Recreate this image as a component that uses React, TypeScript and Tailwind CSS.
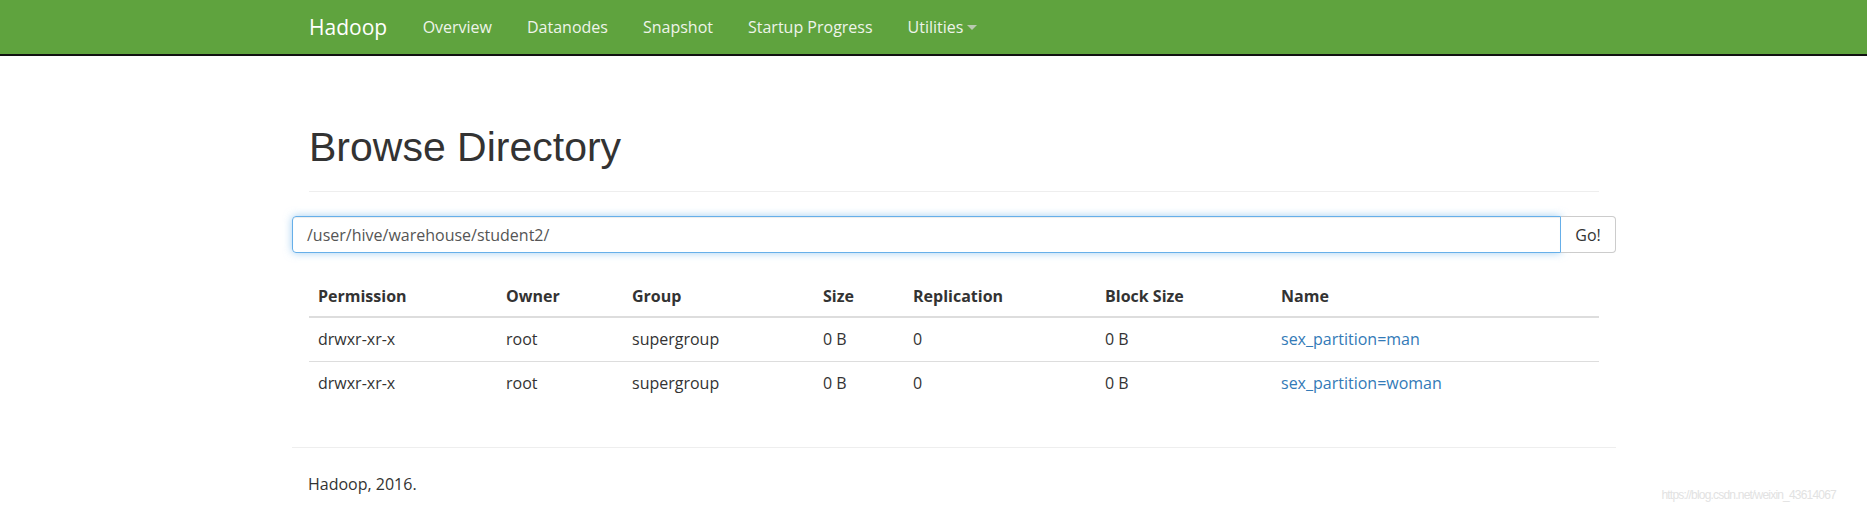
import React from "react";

const rows = [
  { perm: "drwxr-xr-x", owner: "root", group: "supergroup", size: "0 B", rep: "0", block: "0 B", name: "sex_partition=man" },
  { perm: "drwxr-xr-x", owner: "root", group: "supergroup", size: "0 B", rep: "0", block: "0 B", name: "sex_partition=woman" },
];

const body = { fontFamily: '"Open Sans", "Noto Sans", sans-serif' };

export default function App() {
  return (
    <div className="relative min-h-[515px] bg-white text-[#333]" style={body}>
      <nav className="h-[56px] bg-[#5fa33e] border-b-2 border-[#111]">
        <div className="ml-[309px] flex h-full items-center">
          <span className="text-[21px] leading-[23px] text-white mr-[18px]">Hadoop</span>
          <ul className="flex items-center text-[16px] leading-[23px] text-[#eef4ea]">
            <li className="px-[17.5px]">Overview</li>
            <li className="px-[17.5px]">Datanodes</li>
            <li className="px-[17.5px]">Snapshot</li>
            <li className="px-[17.5px]">Startup Progress</li>
            <li className="px-[17.5px] flex items-center">
              Utilities
              <svg width="10" height="6" viewBox="0 0 10 6" className="ml-[4px] mt-[2px]">
                <path d="M0 0 L10 0 L5 5 Z" fill="#b9c9b1" />
              </svg>
            </li>
          </ul>
        </div>
      </nav>

      <main className="ml-[292px] w-[1324px]">
        <div className="mx-[17px] mt-[69px] pb-[10px] border-b border-[#eee]">
          <h1
            className="text-[41px] leading-[45px] mb-[11px] text-[#333]"
            style={{ fontFamily: '"Liberation Sans", Arial, sans-serif' }}
          >
            Browse Directory
          </h1>
        </div>

        <div className="mt-[24px] flex h-[37px]">
          <div className="flex-1 flex items-center rounded-l-[4px] border border-[#66afe9] pl-[14px] text-[16px] text-[#555] shadow-[inset_0_1px_1px_rgba(0,0,0,0.075),0_0_8px_rgba(102,175,233,0.6)]">
            /user/hive/warehouse/student2/
          </div>
          <button className="w-[55px] flex items-center justify-center rounded-r-[4px] border border-l-0 border-[#ccc] bg-white text-[16px] text-[#333]">
            Go!
          </button>
        </div>

        <table className="mx-[17px] mt-[22px] w-[1290px] table-fixed border-collapse text-[16px] leading-[23px]">
          <thead>
            <tr className="text-left font-bold">
              <th className="w-[188px] pl-[9px] pt-[10px] pb-[8px] border-b-2 border-[#ddd]">Permission</th>
              <th className="w-[126px] pl-[9px] pt-[10px] pb-[8px] border-b-2 border-[#ddd]">Owner</th>
              <th className="w-[191px] pl-[9px] pt-[10px] pb-[8px] border-b-2 border-[#ddd]">Group</th>
              <th className="w-[90px] pl-[9px] pt-[10px] pb-[8px] border-b-2 border-[#ddd]">Size</th>
              <th className="w-[192px] pl-[9px] pt-[10px] pb-[8px] border-b-2 border-[#ddd]">Replication</th>
              <th className="w-[176px] pl-[9px] pt-[10px] pb-[8px] border-b-2 border-[#ddd]">Block Size</th>
              <th className="pl-[9px] pt-[10px] pb-[8px] border-b-2 border-[#ddd]">Name</th>
            </tr>
          </thead>
          <tbody>
            {rows.map((r, i) => (
              <tr key={i} className={i === 0 ? "" : "border-t border-[#ddd]"}>
                <td className="pl-[9px] pt-[10px] pb-[10px]">{r.perm}</td>
                <td className="pl-[9px] pt-[10px] pb-[10px]">{r.owner}</td>
                <td className="pl-[9px] pt-[10px] pb-[10px]">{r.group}</td>
                <td className="pl-[9px] pt-[10px] pb-[10px]">{r.size}</td>
                <td className="pl-[9px] pt-[10px] pb-[10px]">{r.rep}</td>
                <td className="pl-[9px] pt-[10px] pb-[10px]">{r.block}</td>
                <td className="pl-[9px] pt-[10px] pb-[10px]">
                  <a className="text-[#337ab7]">{r.name}</a>
                </td>
              </tr>
            ))}
          </tbody>
        </table>

        <div className="mt-[42px] border-t border-[#eee]">
          <p className="mt-[25px] pl-[16px] text-[16px] leading-[23px]">Hadoop, 2016.</p>
        </div>
      </main>

      <div
        className="absolute right-[31px] top-[488px] text-[12px] leading-[14px] tracking-[-0.8px] text-[#e2e2e2]"
        style={{ fontFamily: '"Liberation Sans", Arial, sans-serif' }}
      >
        https://blog.csdn.net/weixin_43614067
      </div>
    </div>
  );
}
